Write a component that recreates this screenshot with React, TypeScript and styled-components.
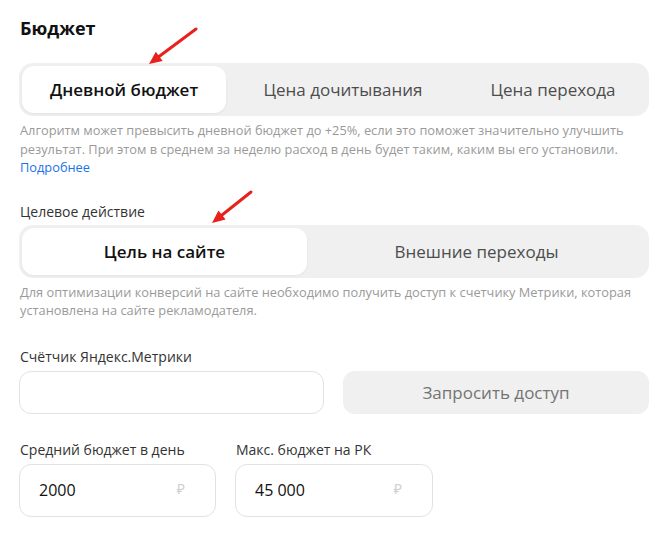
import React from 'react';
import styled, { createGlobalStyle } from 'styled-components';

const GlobalStyle = createGlobalStyle`
  body {
    margin: 0;
    background: #fff;
    font-family: 'Open Sans', 'Noto Sans', Arial, sans-serif;
    color: #222;
  }
`;

const Page = styled.div`
  position: relative;
  width: 662px;
  height: 538px;
  padding: 16px 13px 0 19px;
  box-sizing: border-box;
  overflow: hidden;
`;

const Title = styled.h2`
  margin: 0 0 0 1px;
  font-size: 18px;
  line-height: 24px;
  font-weight: 700;
  color: #111;
`;

const Segmented = styled.div<{ $cols: string; $top: number }>`
  display: grid;
  grid-template-columns: ${p => p.$cols};
  margin-top: ${p => p.$top}px;
  height: 53px;
  padding: 3px;
  box-sizing: border-box;
  background: #f0f0f0;
  border-radius: 14px;
`;

const Tab = styled.div<{ $active?: boolean }>`
  display: flex;
  align-items: center;
  justify-content: center;
  border-radius: 12px;
  font-size: 17px;
  font-weight: ${p => (p.$active ? 600 : 500)};
  color: ${p => (p.$active ? '#111' : '#4d4d4d')};
  background: ${p => (p.$active ? '#fff' : 'transparent')};
  box-shadow: ${p => (p.$active ? '0 1px 3px rgba(0,0,0,0.06)' : 'none')};
`;

const Hint = styled.p`
  margin: 5px 0 0 1px;
  font-size: 12.8px;
  line-height: 18.5px;
  color: #9a9a9a;
`;

const Link = styled.a`
  color: #1a73e8;
  text-decoration: none;
`;

const Label = styled.div<{ $top: number }>`
  margin: ${p => p.$top}px 0 0 1px;
  font-size: 14px;
  line-height: 20px;
  color: #333;
`;

const Row = styled.div<{ $cols: string; $gap: number }>`
  display: grid;
  grid-template-columns: ${p => p.$cols};
  column-gap: ${p => p.$gap}px;
`;

const Field = styled.div<{ $h: number }>`
  display: flex;
  align-items: center;
  justify-content: space-between;
  height: ${p => p.$h}px;
  margin-top: 4px;
  padding: 0 30px 0 19px;
  box-sizing: border-box;
  border: 1px solid #e2e2e2;
  border-radius: 12px;
  background: #fff;
  font-size: 16px;
  color: #111;
`;

const Currency = styled.span`
  color: #cfcfcf;
  font-size: 14px;
  margin-top: -4px;
`;

const GhostButton = styled.div`
  display: flex;
  align-items: center;
  justify-content: center;
  height: 43px;
  margin-top: 4px;
  border-radius: 12px;
  background: #f0f0f0;
  font-size: 17px;
  color: #747474;
`;

const Column = styled.div``;

const Arrow = styled.svg`
  position: absolute;
  pointer-events: none;
`;

const RedArrow: React.FC<{ x1: number; y1: number; x2: number; y2: number }> = ({ x1, y1, x2, y2 }) => {
  const ang = Math.atan2(y2 - y1, x2 - x1);
  const len = 14;
  const spread = 0.42;
  const ax = x2 - len * Math.cos(ang - spread);
  const ay = y2 - len * Math.sin(ang - spread);
  const bx = x2 - len * Math.cos(ang + spread);
  const by = y2 - len * Math.sin(ang + spread);
  const sx = x2 - 10 * Math.cos(ang);
  const sy = y2 - 10 * Math.sin(ang);
  return (
    <Arrow width="662" height="538" style={{ left: 0, top: 0 }}>
      <line x1={x1} y1={y1} x2={sx} y2={sy} stroke="#e8211c" strokeWidth="3" strokeLinecap="round" />
      <polygon points={`${x2},${y2} ${ax},${ay} ${bx},${by}`} fill="#e8211c" />
    </Arrow>
  );
};

const App: React.FC = () => {
  return (
    <>
      <GlobalStyle />
      <Page>
        <Title>Бюджет</Title>

        <Segmented $cols="204px 234px 1fr" $top={23}>
          <Tab $active>Дневной бюджет</Tab>
          <Tab>Цена дочитывания</Tab>
          <Tab>Цена перехода</Tab>
        </Segmented>
        <Hint>
          Алгоритм может превысить дневной бюджет до +25%, если это поможет значительно улучшить
          результат. При этом в среднем за неделю расход в день будет таким, каким вы его установили.
          <br />
          <Link href="#">Подробнее</Link>
        </Hint>

        <Label $top={25}>Целевое действие</Label>
        <Segmented $cols="285px 1fr" $top={3}>
          <Tab $active>Цель на сайте</Tab>
          <Tab>Внешние переходы</Tab>
        </Segmented>
        <Hint>
          Для оптимизации конверсий на сайте необходимо получить доступ к счетчику Метрики, которая
          установлена на сайте рекламодателя.
        </Hint>

        <Label $top={27}>Счётчик Яндекс.Метрики</Label>
        <Row $cols="305px 1fr" $gap={19}>
          <Field $h={43} />
          <GhostButton>Запросить доступ</GhostButton>
        </Row>

        <Row $cols="197px 198px" $gap={19}>
          <Column>
            <Label $top={26}>Средний бюджет в день</Label>
            <Field $h={53}>
              2000
              <Currency>₽</Currency>
            </Field>
          </Column>
          <Column>
            <Label $top={26}>Макс. бюджет на РК</Label>
            <Field $h={53}>
              45 000
              <Currency>₽</Currency>
            </Field>
          </Column>
        </Row>

        <RedArrow x1={196} y1={29} x2={149} y2={64} />
        <RedArrow x1={251} y1={192} x2={212} y2={223} />
      </Page>
    </>
  );
};

export default App;
